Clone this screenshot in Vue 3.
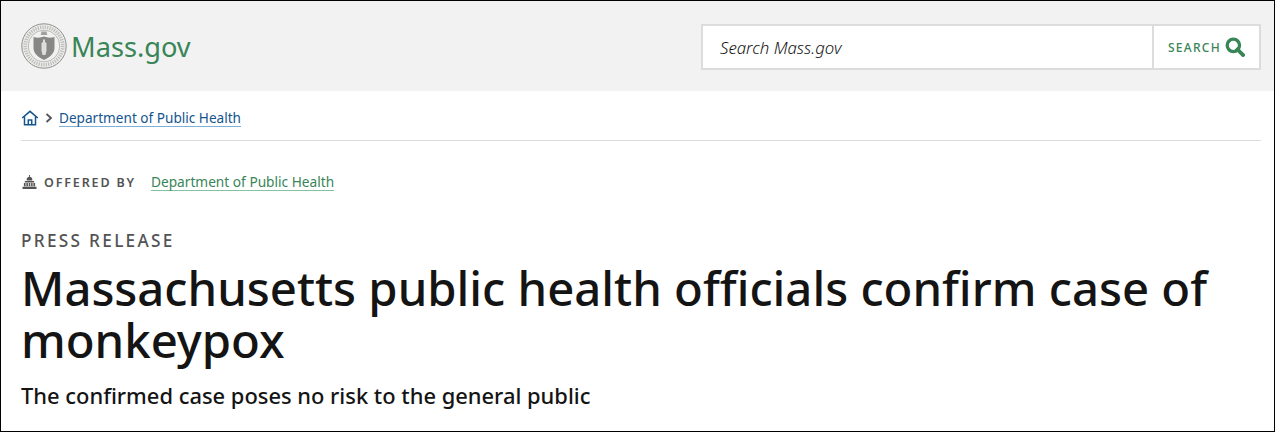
<template>
  <div class="page">
    <header class="top">
      <a class="logo">
        <svg class="seal" viewBox="0 0 46 46" width="46" height="46">
          <circle cx="23" cy="23" r="22.2" fill="#ececea" stroke="#8f8f8d" stroke-width="1" />
          <circle cx="23" cy="23" r="18.8" fill="none" stroke="#bcbcba" stroke-width="3.600" stroke-dasharray="1.200 1.200" />
          <circle cx="23" cy="23" r="15.800" fill="#f1f1ef" stroke="#a2a2a0" stroke-width="0.700" />
          <path d="M12.500 14c3.500 1 7.500 .8 10.500-.5c3 1.300 7 1.500 10.500 .5v11c0 6-5.500 9.500-10.500 12c-5-2.500-10.500-6-10.500-12z" fill="#878786" />
          <path d="M22 16.500h2v2.500l1.500 1v7.500l-1 4.500h-3l-1-4.500v-7.500l1.500-1z" fill="#dededc" />
          <path d="M20.500 8.500h5l.8 3.500h-6.600z" fill="#a0a09e" />
        </svg>
        <span class="logo-text">Mass.gov</span>
      </a>
      <form class="search" @submit.prevent>
        <div class="search-input">Search Mass.gov</div>
        <button class="search-btn" type="submit">
          <span>SEARCH</span>
          <svg viewBox="0 0 22 22" width="20" height="20">
            <circle cx="9.200" cy="9.200" r="6.800" fill="none" stroke="#388557" stroke-width="3.600" />
            <path d="M13.800 13.800l6 6" stroke="#388557" stroke-width="4.200" stroke-linecap="square" />
          </svg>
        </button>
      </form>
    </header>

    <main class="content">
      <nav class="crumbs">
        <svg viewBox="0 0 18 16" width="18" height="16">
          <path d="M1.200 8L9 1.300L16.800 8" fill="none" stroke="#14558f" stroke-width="1.600" />
          <path d="M3.500 6.500V14.700H14.500V6.500" fill="none" stroke="#14558f" stroke-width="1.500" />
          <path d="M7.300 14.700V10H10.700V14.700" fill="none" stroke="#14558f" stroke-width="1.500" />
        </svg>
        <svg class="chev" viewBox="0 0 8 10" width="8" height="10">
          <path d="M1.500 1L6 5L1.500 9" fill="none" stroke="#53535a" stroke-width="1.800" />
        </svg>
        <a class="crumb-link">Department of Public Health</a>
      </nav>

      <div class="offered">
        <svg class="dome" viewBox="0 0 16 15" width="15" height="14">
          <path d="M7.500 0h1v2h-1z M5 4.500c0-1.500 1.500-2.500 3-2.500s3 1 3 2.500v1.500H5z M3 6.500h10V8H3z M2 8.500h12V12H2z M0.500 12.500h15V15H0.500z" fill="#535353" />
          <path d="M4.200 8.500v3.500M6.800 8.500v3.500M9.200 8.500v3.500M11.800 8.500v3.500" stroke="#f4f4f4" stroke-width="0.900" />
        </svg>
        <span class="offered-label">OFFERED BY</span>
        <a class="offered-link">Department of Public Health</a>
      </div>

      <div class="kicker">PRESS RELEASE</div>
      <h1>Massachusetts public health officials confirm case of monkeypox</h1>
      <p class="sub">The confirmed case poses no risk to the general public</p>
    </main>
  </div>
</template>

<script setup>
</script>

<style>
html,
body {
  margin: 0;
  background: #fff;
}
</style>

<style scoped>
.page {
  box-sizing: border-box;
  width: 1275px;
  height: 432px;
  border: 1px solid #000;
  overflow: hidden;
  font-family: "Noto Sans", sans-serif;
  color: #141414;
}

.top {
  height: 90px;
  background: #f2f2f2;
  display: flex;
  align-items: center;
  justify-content: space-between;
  padding: 0 13px 0 20px;
}

.logo {
  display: flex;
  align-items: center;
  gap: 4px;
}

.logo-text {
  font-size: 27.200px;
  color: #388557;
}

.search {
  box-sizing: border-box;
  width: 560px;
  height: 46px;
  border: 2px solid #dcdcdc;
  background: #fff;
  display: flex;
  margin-top: 2px;
}

.search-input {
  flex: 1;
  padding-left: 17px;
  line-height: 43px;
  font-size: 16.800px;
  font-style: italic;
  font-weight: 300;
  color: #141414;
}

.search-btn {
  width: 107px;
  border: 0;
  border-left: 2px solid #dcdcdc;
  background: #fff;
  display: flex;
  align-items: center;
  justify-content: center;
  gap: 4px;
  padding: 0;
  font-family: inherit;
  font-size: 12px;
  font-weight: 500;
  letter-spacing: 1.300px;
  color: #388557;
}

.content {
  padding: 0 13px 0 20px;
}

.crumbs {
  box-sizing: border-box;
  height: 50px;
  border-bottom: 1px solid #dcdcdc;
  display: flex;
  align-items: center;
  padding-top: 4px;
}

.chev {
  margin: 0 6px 0 6px;
}

.crumb-link {
  font-size: 13.600px;
  color: #14558f;
  border-bottom: 1px solid #7fb0d6;
  line-height: 16px;
  margin-top: 2px;
}

.offered {
  display: flex;
  align-items: center;
  margin-top: 32px;
  height: 18px;
}

.dome {
  margin-left: 1px;
}

.offered-label {
  margin-left: 7px;
  font-size: 12.500px;
  font-weight: 600;
  letter-spacing: 1.850px;
  color: #535353;
}

.offered-link {
  margin-left: 15px;
  font-size: 13.700px;
  color: #388557;
  border-bottom: 1px solid #85c2a0;
  line-height: 16px;
}

.kicker {
  margin-top: 39px;
  font-size: 17.200px;
  font-weight: 500;
  letter-spacing: 2.300px;
  color: #535353;
  line-height: 22px;
}

h1 {
  margin: 10px 0 0;
  font-size: 47.250px;
  font-weight: 500;
  line-height: 52px;
  color: #141414;
}

.sub {
  margin: 15px 0 0;
  font-size: 21.900px;
  font-weight: 500;
  line-height: 30px;
}
</style>
